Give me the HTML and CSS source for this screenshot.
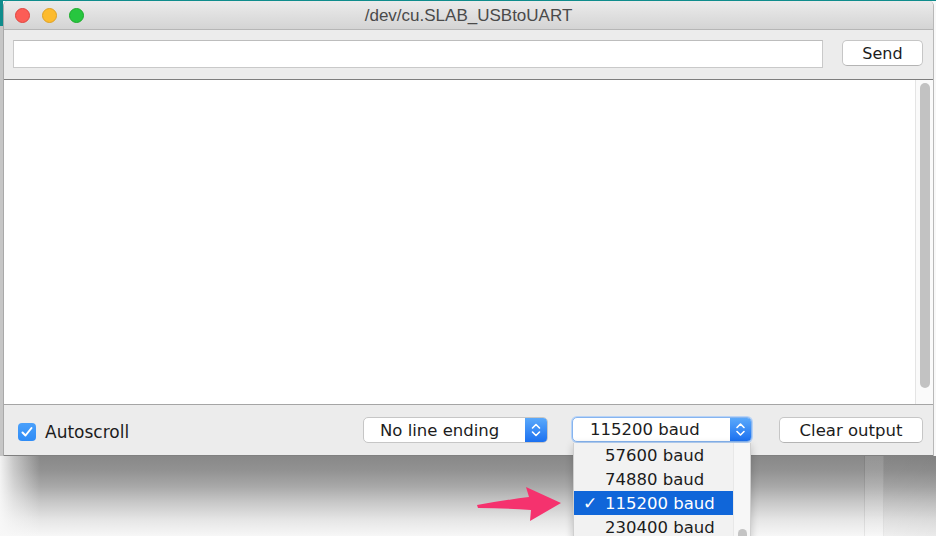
FILE: index.html
```html
<!DOCTYPE html>
<html>
<head>
<meta charset="utf-8">
<title>Serial Monitor</title>
<link rel="stylesheet" href="styles.css">
</head>
<body>
<div class="desktop">
  <div class="window">
    <div class="titlebar">
      <div class="lights">
        <span class="light red"></span>
        <span class="light yellow"></span>
        <span class="light green"></span>
      </div>
      <div class="title">/dev/cu.SLAB_USBtoUART</div>
    </div>
    <div class="toolbar">
      <div class="input"></div>
      <div class="button send">Send</div>
    </div>
    <div class="output">
      <div class="text"></div>
      <div class="track"><div class="thumb"></div></div>
    </div>
    <div class="statusbar">
      <div class="check-wrap">
        <span class="checkbox">
          <svg width="18" height="18" viewBox="0 0 18 18"><path d="M4.5 9.5 L7.5 12.5 L13.5 5" fill="none" stroke="#fff" stroke-width="2" stroke-linecap="round" stroke-linejoin="round"/></svg>
        </span>
        <span class="label">Autoscroll</span>
      </div>
      <div class="select sel-ending">
        <span class="sel-text">No line ending</span>
        <span class="stepper"><svg width="22" height="24" viewBox="0 0 22 24"><path d="M7.5 10 L11 6.5 L14.5 10 M7.5 14 L11 17.5 L14.5 14" fill="none" stroke="#fff" stroke-width="1.6" stroke-linecap="round" stroke-linejoin="round"/></svg></span>
      </div>
      <div class="select sel-baud">
        <span class="sel-text">115200 baud</span>
        <span class="stepper"><svg width="21" height="23" viewBox="0 0 21 23"><path d="M7 9.5 L10.5 6 L14 9.5 M7 13.5 L10.5 17 L14 13.5" fill="none" stroke="#fff" stroke-width="1.6" stroke-linecap="round" stroke-linejoin="round"/></svg></span>
      </div>
      <div class="button clear">Clear output</div>
    </div>
  </div>
  <div class="shadow"></div>

  <div class="menu">
    <div class="menu-items">
      <div class="item"><span class="mark"></span>57600 baud</div>
      <div class="item"><span class="mark"></span>74880 baud</div>
      <div class="item selected"><span class="mark">✓</span>115200 baud</div>
      <div class="item"><span class="mark"></span>230400 baud</div>
    </div>
    <div class="menu-scroll"><span class="menu-knob"></span></div>
  </div>

  <svg class="arrow" width="100" height="50" viewBox="470 480 100 50">
    <path d="M477 505 Q505 500 529 497 L526 487 L561 503 L530 521 L531 510 Q505 508 478 508 Z" fill="#f5326e"/>
  </svg>
</div>
</body>
</html>
```

FILE: styles.css
```css
html, body {
  margin: 0;
  padding: 0;
  background: #ffffff;
}

.desktop {
  position: relative;
  width: 936px;
  height: 536px;
  overflow: hidden;
  background:
    linear-gradient(#0f8c8c, #0f8c8c) top left / 100% 1px no-repeat,
    linear-gradient(#0f8c8c, #0f8c8c) top left / 3px 26px no-repeat,
    linear-gradient(to right, #c6c6c6 0, #c6c6c6 3px, transparent 3px) top left / 100% 456px no-repeat,
    #f8f8f8;
  font-family: "DejaVu Sans", "Liberation Sans", sans-serif;
  color: #1c1c1c;
}

.window {
  position: relative;
  margin-left: 3px;
  margin-top: 1px;
  width: 931px;
  box-sizing: border-box;
  border-left: 1px solid #a9a9a9;
  border-right: 1px solid #b8b8b8;
  border-radius: 5px 5px 0 0;
  background: #ececec;
}

.shadow {
  height: 80px;
  background:
    linear-gradient(to right, rgba(248,248,248,0.95) 0, rgba(248,248,248,0.55) 14px, rgba(248,248,248,0) 40px),
    linear-gradient(to right, transparent 865px, rgba(255,255,255,0.1) 865px, rgba(255,255,255,0.1) 884px, rgba(0,0,0,0.03) 884px, rgba(0,0,0,0.05) 936px),
    linear-gradient(to right, transparent 864px, rgba(0,0,0,0.07) 864px, rgba(0,0,0,0.07) 865px, transparent 865px, transparent 883px, rgba(0,0,0,0.07) 883px, rgba(0,0,0,0.07) 884px, transparent 884px),
    linear-gradient(#888888 0, #929292 18%, #a8a8a8 38%, #c8c8c8 58%, #e6e6e6 80%, #f7f7f7 100%);
}

.titlebar {
  position: relative;
  height: 28px;
  border-bottom: 1px solid #b6b6b6;
  border-radius: 5px 5px 0 0;
  background: linear-gradient(#ebebeb, #d4d4d4);
  display: flex;
  align-items: center;
  justify-content: center;
}

.lights {
  position: absolute;
  left: 11px;
  top: 7px;
  display: flex;
  gap: 12px;
}

.light {
  width: 15px;
  height: 15px;
  border-radius: 50%;
  box-sizing: border-box;
}
.red { background: #fc5d56; border: 1px solid #e0443e; }
.yellow { background: #fdbb2e; border: 1px solid #dea123; }
.green { background: #27c63f; border: 1px solid #1aab2b; }

.title {
  font-family: "Liberation Sans", Arial, sans-serif;
  font-size: 17px;
  color: #4a4a4a;
  margin-top: 1px;
}

.toolbar {
  height: 39px;
  padding: 10px 10px 0 9px;
  display: flex;
  align-items: flex-start;
  gap: 19px;
  border-bottom: 1px solid #7e7e7e;
}

.input {
  width: 810px;
  height: 28px;
  box-sizing: border-box;
  background: #fff;
  border: 1px solid #c9c9c9;
  border-top-color: #bdbdbd;
}

.button {
  box-sizing: border-box;
  background: #fff;
  border: 1px solid #c6c6c6;
  border-bottom-color: #b4b4b4;
  border-radius: 5px;
  font-size: 16px;
  display: flex;
  align-items: center;
  justify-content: center;
  color: #1c1c1c;
}

.send {
  width: 81px;
  height: 26px;
}

.output {
  height: 324px;
  display: flex;
  background: #fff;
}

.text {
  flex: 1;
}

.track {
  width: 18px;
  box-sizing: border-box;
  border-left: 1px solid #e4e4e4;
  background: #fafafa;
  padding: 3px 0 0 4px;
}

.thumb {
  width: 10px;
  height: 305px;
  border-radius: 5px;
  background: #c2c2c2;
}

.statusbar {
  height: 38px;
  padding: 12px 10px 0 14px;
  border-top: 1px solid #a5a5a5;
  border-bottom: 1px solid #808080;
  display: flex;
  align-items: flex-start;
}

.check-wrap {
  flex: 1;
  display: flex;
  align-items: center;
  gap: 9px;
  margin-top: 6px;
}

.checkbox {
  width: 18px;
  height: 18px;
  border-radius: 4px;
  background: linear-gradient(#4aa0fb, #2f8cf6);
  display: block;
}
.checkbox svg { display: block; }

.label {
  font-size: 17px;
  line-height: 18px;
}

.select {
  height: 26px;
  box-sizing: border-box;
  background: #fff;
  border: 1px solid #c6c6c6;
  border-radius: 5px;
  display: flex;
  font-size: 16.5px;
}

.sel-ending {
  width: 185px;
  margin-right: 24px;
}

.sel-baud {
  width: 180px;
  height: 25px;
  margin-right: 27px;
  border-color: #86b4ef;
  box-shadow: 0 0 0 1px #b7d3f7;
}

.sel-text {
  flex: 1;
  display: flex;
  align-items: center;
  padding-left: 16px;
}
.sel-baud .sel-text { padding-left: 17px; }

.stepper {
  width: 22px;
  border-radius: 0 4px 4px 0;
  background: linear-gradient(#5aa9fb, #1b70f0);
  display: flex;
  align-items: center;
  justify-content: center;
}
.sel-baud .stepper { width: 21px; }
.stepper svg { display: block; }

.clear {
  width: 144px;
  height: 26px;
  font-size: 16.5px;
}

.menu {
  position: absolute;
  left: 573px;
  top: 443px;
  width: 178px;
  height: 100px;
  box-sizing: border-box;
  background: #f2f2f2;
  border-left: 1px solid #cfcfcf;
  border-right: 1px solid #cfcfcf;
  display: flex;
  box-shadow: 0 2px 8px rgba(0, 0, 0, 0.2);
}

.menu-items {
  width: 159px;
}

.item {
  height: 24px;
  display: flex;
  align-items: center;
  font-size: 16.5px;
  color: #1c1c1c;
}

.item.selected {
  background: #1066d9;
  color: #fff;
}

.mark {
  width: 31px;
  box-sizing: border-box;
  padding-left: 9px;
  font-size: 17px;
}

.menu-scroll {
  flex: 1;
  background: #f7f7f7;
  border-left: 1px solid #e8e8e8;
  position: relative;
}

.menu-knob {
  position: absolute;
  left: 4px;
  top: 86px;
  width: 9px;
  height: 20px;
  border-radius: 5px;
  background: #c4c4c4;
}

.arrow {
  position: absolute;
  left: 470px;
  top: 480px;
}
```
